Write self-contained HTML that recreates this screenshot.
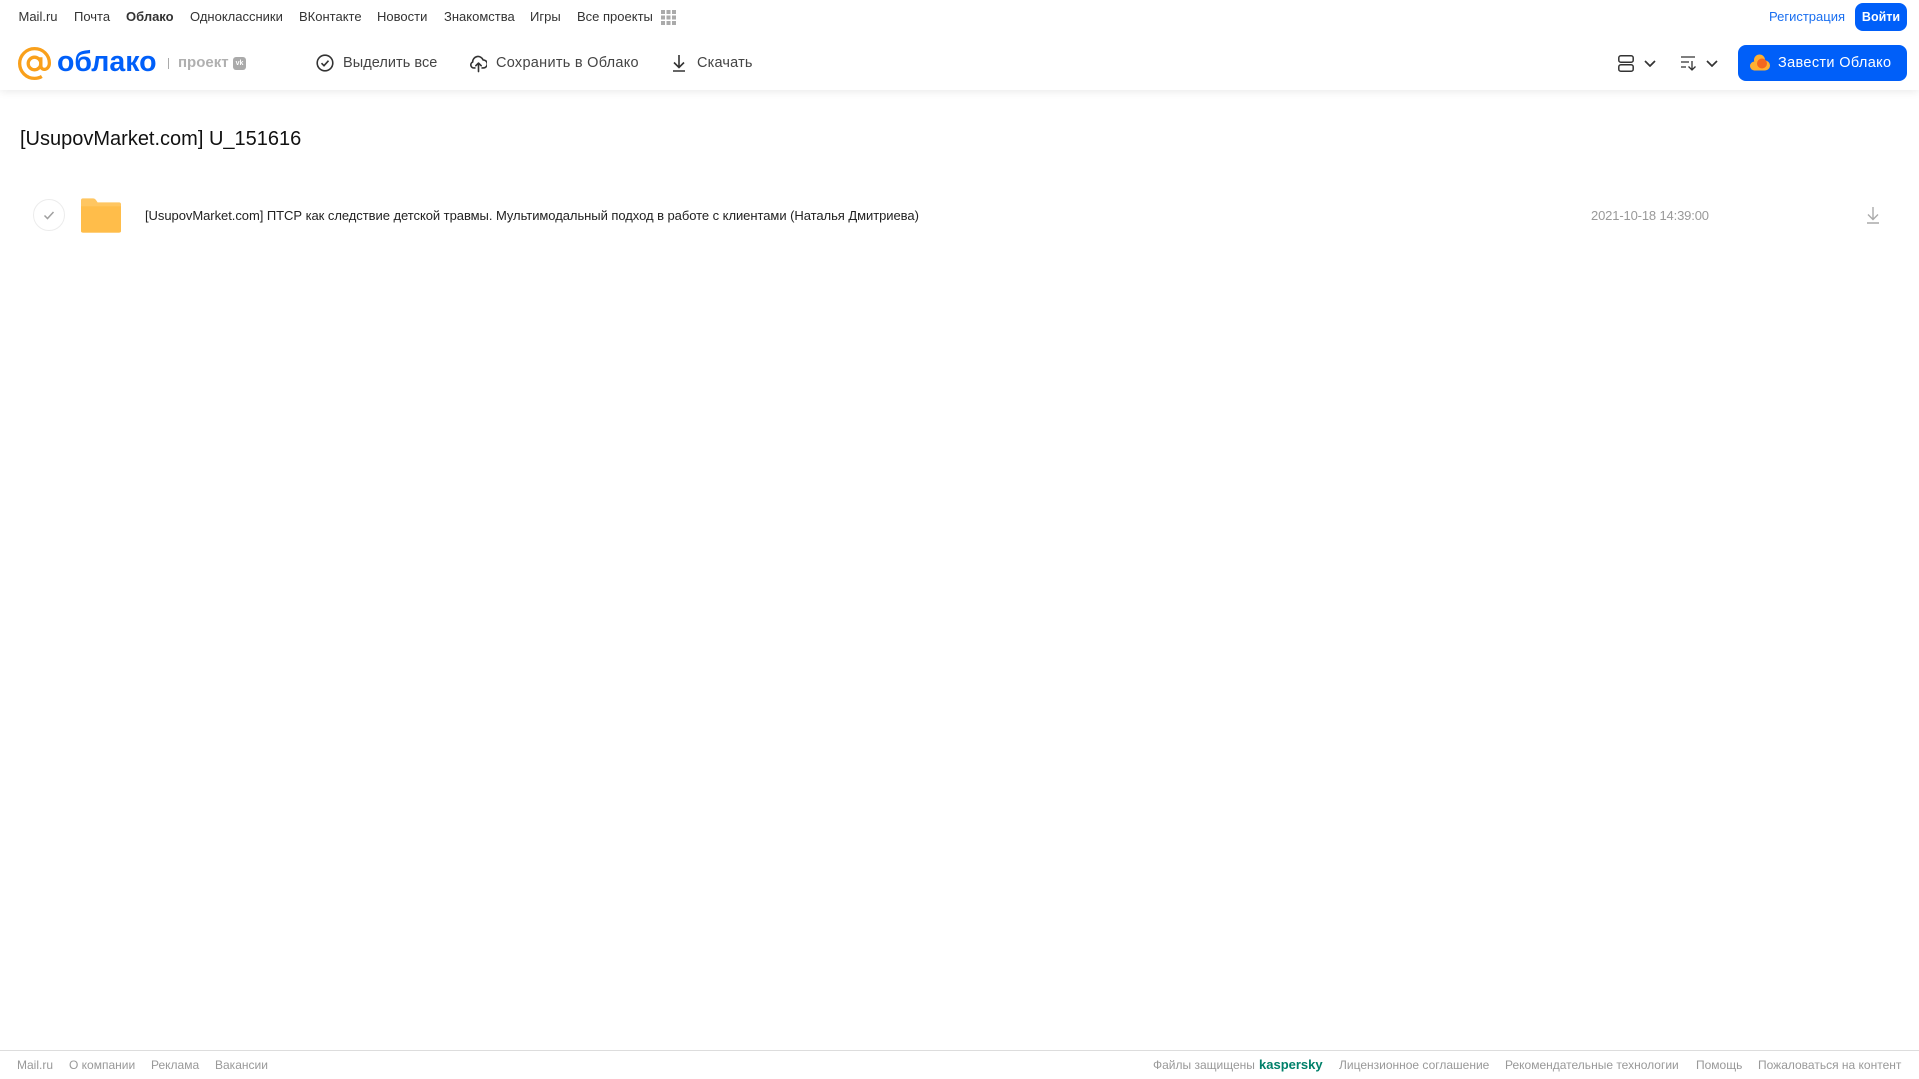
<!DOCTYPE html>
<html lang="ru">
<head>
<meta charset="utf-8">
<title>Облако</title>
<style>
html,body{margin:0;padding:0;width:1919px;height:1079px;overflow:hidden;background:#fff;font-family:"Liberation Sans",Arial,sans-serif}
.t{position:absolute;white-space:nowrap;line-height:20px}
.n{top:7px;font-size:13px;color:#333}
.h{top:53px;font-size:14.5px;color:#444;letter-spacing:.35px}
.f{top:1055px;font-size:12px;color:#999}
svg{position:absolute;display:block}
#hdr{position:absolute;left:0;top:0;width:1919px;height:90px;background:#fff;box-shadow:0 2px 8px rgba(0,0,0,.08)}
#foot{position:absolute;left:0;top:1050px;width:1919px;height:1px;background:#ddd}
.btn{position:absolute;background:#005ff9;color:#fff}
</style>
</head>
<body>
<div id="hdr"></div>

<span class="t n" style="left:18.5px">Mail.ru</span>
<span class="t n" style="left:74px">Почта</span>
<span class="t n" style="left:126px;font-weight:bold">Облако</span>
<span class="t n" style="left:190px">Одноклассники</span>
<span class="t n" style="left:299px">ВКонтакте</span>
<span class="t n" style="left:377px">Новости</span>
<span class="t n" style="left:444px">Знакомства</span>
<span class="t n" style="left:530px">Игры</span>
<span class="t n" style="left:577px">Все проекты</span>
<svg style="left:661px;top:10px" width="15" height="15" viewBox="0 0 15 15" fill="#aaa">
<rect x="0" y="0" width="4" height="4"/><rect x="5.5" y="0" width="4" height="4"/><rect x="11" y="0" width="4" height="4"/>
<rect x="0" y="5.5" width="4" height="4"/><rect x="5.5" y="5.5" width="4" height="4"/><rect x="11" y="5.5" width="4" height="4"/>
<rect x="0" y="11" width="4" height="4"/><rect x="5.5" y="11" width="4" height="4"/><rect x="11" y="11" width="4" height="4"/>
</svg>
<span class="t n" style="left:1769px;color:#1a6ff0">Регистрация</span>
<div class="btn" style="left:1855px;top:3px;width:52px;height:28px;border-radius:8px;font-size:12.5px;font-weight:bold;line-height:28px;text-align:center">Войти</div>

<svg style="left:18px;top:47px" width="34" height="34" viewBox="0 0 35 35" fill="none" stroke="#f9a01b" stroke-width="3.4">
<circle cx="17" cy="17" r="6.500"/>
<path d="M23.500 10.500V19c0 2.600 1.600 4 3.600 4 2.700 0 5.200-2.400 5.200-6.400 0-8.500-6.800-14.900-15.300-14.900C8.600 1.700 1.700 8.500 1.700 17s6.900 15.300 15.300 15.300c2.900 0 5.400-.7 7.500-2"/>
</svg>
<span class="t" style="left:57px;top:46px;font-size:28.5px;line-height:32px;font-weight:bold;color:#005ff9">облако</span>
<div style="position:absolute;left:168px;top:58px;width:1px;height:11px;background:#aaa"></div>
<span class="t" style="left:178px;top:53px;font-size:15px;font-weight:bold;color:#b0b0b0">проект</span>
<div style="position:absolute;left:233px;top:57px;width:13px;height:13px;border-radius:3px;background:#aaa;color:#fff;font:bold 7px/13px 'Liberation Sans',sans-serif;text-align:center">vk</div>

<svg style="left:316px;top:54px" width="18" height="18" viewBox="0 0 18 18" fill="none" stroke="#333" stroke-width="1.600">
<circle cx="9" cy="9" r="7.800"/><path d="M5.500 9.200l2.500 2.500 4.500-5"/>
</svg>
<span class="t h" style="left:343px;letter-spacing:.05px">Выделить все</span>
<svg style="left:470px;top:54px" width="17" height="19" viewBox="0 0 19 21" fill="none" stroke="#333" stroke-width="1.800" stroke-linecap="round" stroke-linejoin="round">
<path d="M5.500 15.500H4.500A3.500 3.500 0 0 1 3 8.800 6 6 0 0 1 14.600 6.500a4.500 4.500 0 0 1 .4 9h-1.500"/><path d="M9.500 19.500V10.500M6.500 13l3-3 3 3"/>
</svg>
<span class="t h" style="left:496px;letter-spacing:.28px">Сохранить в Облако</span>
<svg style="left:671px;top:54px" width="16" height="18" viewBox="0 0 16 18" fill="none" stroke="#333" stroke-width="1.600">
<path d="M8 1v12M3 8.500l5 5 5-5M2 17h12"/>
</svg>
<span class="t h" style="left:697px;letter-spacing:.18px">Скачать</span>

<svg style="left:1618px;top:55px" width="16" height="17" viewBox="0 0 16 17" fill="none" stroke="#333" stroke-width="1.500">
<rect x=".8" y=".8" width="14.400" height="6.400" rx="2"/><rect x=".8" y="9.800" width="14.400" height="6.400" rx="2"/>
</svg>
<svg style="left:1644px;top:60px" width="12" height="7" viewBox="0 0 12 7" fill="none" stroke="#333" stroke-width="1.700"><path d="M1 1l5 5 5-5"/></svg>
<svg style="left:1680px;top:55px" width="18" height="16" viewBox="0 0 18 16" fill="none" stroke="#333" stroke-width="1.300">
<path d="M1 2h14M1 7h8M1 12h5M12 6v9M8.500 11.500l3.500 3.500 3.500-3.500"/>
</svg>
<svg style="left:1706px;top:60px" width="12" height="7" viewBox="0 0 12 7" fill="none" stroke="#333" stroke-width="1.700"><path d="M1 1l5 5 5-5"/></svg>

<div class="btn" style="left:1738px;top:45px;width:169px;height:36px;border-radius:8px"></div>
<svg style="left:1750px;top:54px" width="20" height="17" viewBox="0 0 20 17">
<circle cx="4.500" cy="12" r="4.500" fill="#ffb030"/><circle cx="9.500" cy="6" r="5.500" fill="#ffb030"/><circle cx="15" cy="11.500" r="5" fill="#ffb030"/><rect x="4" y="9" width="11" height="7.500" fill="#ffb030"/>
<circle cx="12" cy="9.500" r="5" fill="#f4671f"/>
</svg>
<span class="t h" style="left:1778px;color:#fff">Завести Облако</span>

<span class="t" style="left:20px;top:127px;font-size:20px;line-height:24px;color:#111">[UsupovMarket.com] U_151616</span>

<svg style="left:32px;top:198px" width="34" height="34" viewBox="0 0 34 34" fill="none">
<circle cx="17" cy="17" r="15.500" stroke="#ececec" stroke-width="1"/>
<path d="M12.500 17.500l3 3 6-6.500" stroke="#a0a0a0" stroke-width="1.500"/>
</svg>
<svg style="left:81px;top:198px" width="40" height="35" viewBox="0 0 41 35">
<path d="M2 0h10c2 0 3 1 4 2.500L17 4h22a2 2 0 0 1 2 2v27a2 2 0 0 1-2 2H2a2 2 0 0 1-2-2V2a2 2 0 0 1 2-2z" fill="#ffc661"/>
<path d="M0 8h41v25a2 2 0 0 1-2 2H2a2 2 0 0 1-2-2z" fill="#ffbd4a"/>
</svg>
<span class="t" style="left:145px;top:206px;font-size:13px;letter-spacing:-.05px;color:#222">[UsupovMarket.com] ПТСР как следствие детской травмы. Мультимодальный подход в работе с клиентами (Наталья Дмитриева)</span>
<span class="t" style="left:1591px;top:206px;font-size:13px;letter-spacing:-.15px;color:#999">2021-10-18 14:39:00</span>
<svg style="left:1866px;top:206px" width="14" height="18" viewBox="0 0 14 18" fill="none" stroke="#aaa" stroke-width="1.400">
<path d="M7 1v12M2 8.500l5 5 5-5M1 17h12"/>
</svg>

<div id="foot"></div>
<span class="t f" style="left:17px">Mail.ru</span>
<span class="t f" style="left:69px">О компании</span>
<span class="t f" style="left:151px">Реклама</span>
<span class="t f" style="left:215px">Вакансии</span>
<span class="t f" style="left:1153px">Файлы защищены</span>
<span class="t f" style="left:1259px;font-size:13px;font-weight:bold;color:#00806a">kaspersky</span>
<span class="t f" style="left:1339px">Лицензионное соглашение</span>
<span class="t f" style="left:1505px">Рекомендательные технологии</span>
<span class="t f" style="left:1696px">Помощь</span>
<span class="t f" style="left:1758px">Пожаловаться на контент</span>
</body>
</html>
